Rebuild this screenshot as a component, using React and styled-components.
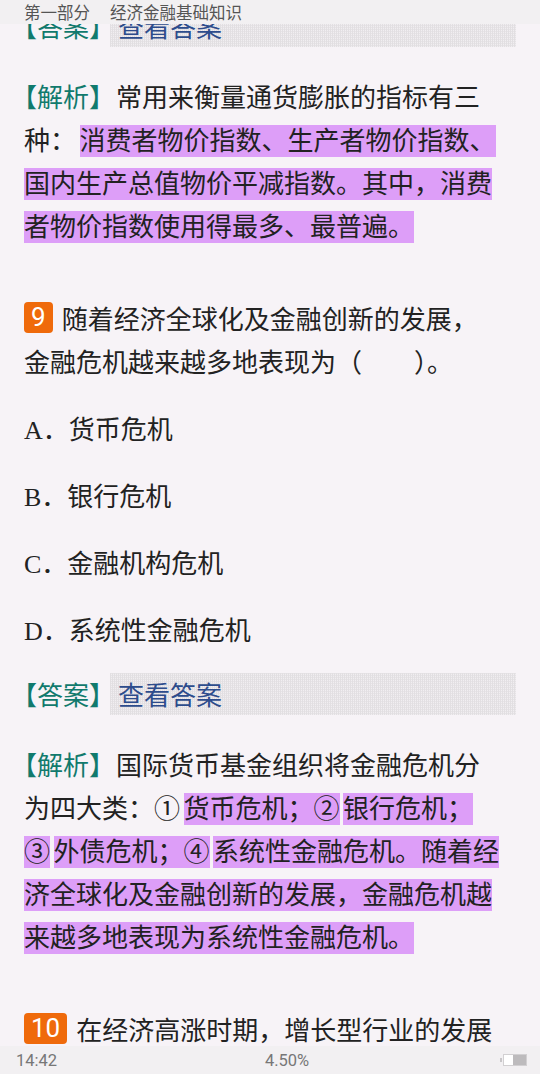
import React from 'react'
import styled, { createGlobalStyle } from 'styled-components'

const GlobalStyle = createGlobalStyle`
  html, body {
    margin: 0;
    padding: 0;
    background: #f7f3f7;
  }
  body {
    font-family: 'Noto Sans CJK SC', 'Noto Sans', sans-serif;
    color: #222;
  }
`

export default () => {
  return (
    <>
      <GlobalStyle />
      <TopBar>
        <span>第一部分</span>
        <span>经济金融基础知识</span>
      </TopBar>

      <Page>
        <AnswerRow>
          <Label>【答案】</Label>
          <AnswerBox>查看答案</AnswerBox>
        </AnswerRow>

        <Analysis>
          <Label>【解析】</Label>常用来衡量通货膨胀的指标有三种：<Mark>消费者物价指数、生产者物价指数、国内生产总值物价平减指数。其中，消费者物价指数使用得最多、最普遍。</Mark>
        </Analysis>

        <Question>
          <Stem>
            <Badge>9</Badge>随着经济全球化及金融创新的发展，金融危机越来越多地表现为（　　）。
          </Stem>
          <Options>
            <Option><Letter>A</Letter>．货币危机</Option>
            <Option><Letter>B</Letter>．银行危机</Option>
            <Option><Letter>C</Letter>．金融机构危机</Option>
            <Option><Letter>D</Letter>．系统性金融危机</Option>
          </Options>
        </Question>

        <AnswerRow $top={23}>
          <Label>【答案】</Label>
          <AnswerBox>查看答案</AnswerBox>
        </AnswerRow>

        <Analysis>
          <Label>【解析】</Label>国际货币基金组织将金融危机分为四大类：①<Mark>货币危机；②</Mark><Mark>银行危机；<br />③</Mark><Mark>外债危机；④</Mark><Mark>系统性金融危机。随着经济全球化及金融创新的发展，金融危机越来越多地表现为系统性金融危机。</Mark>
        </Analysis>

        <Question>
          <Stem>
            <Badge>10</Badge>在经济高涨时期，增长型行业的发展速度通常高于平均水平。
          </Stem>
        </Question>
      </Page>

      <BottomBar>
        <span>14:42</span>
        <Progress>4.50%</Progress>
        <Battery />
      </BottomBar>
    </>
  )
}

/***************************** Styled Components *****************************/

const TopBar = styled.header`
  position: fixed;
  top: 0;
  left: 0;
  right: 0;
  height: 24px;
  z-index: 2;
  display: flex;
  align-items: center;
  gap: 20px;
  padding: 0 24px;
  background: #f2f0f2;
  color: #555;
  font-size: 16.5px;
  line-height: 24px;
`

const BottomBar = styled.footer`
  position: fixed;
  left: 0;
  right: 0;
  bottom: 0;
  height: 28px;
  z-index: 2;
  display: flex;
  align-items: center;
  justify-content: space-between;
  padding: 0 13px 0 16px;
  background: #f2f0f2;
  color: #777;
  font-family: 'Roboto', 'Noto Sans', sans-serif;
  font-size: 16.5px;
`

const Progress = styled.span`
  margin-left: 14px;
`

const Battery = styled.span`
  position: relative;
  width: 22px;
  height: 10px;
  border: 1px solid #d2d0d2;
  background: linear-gradient(to right, #fff 0 40%, #bdbbbd 40% 100%);
  &::before {
    content: '';
    position: absolute;
    left: -4px;
    top: 3px;
    width: 2px;
    height: 4px;
    background: #c9c7c9;
  }
`

const Page = styled.main`
  padding: 5px 24px 60px;
`

const AnswerRow = styled.div`
  display: flex;
  align-items: center;
  height: 42px;
  margin-top: ${props => props.$top || 0}px;
  font-size: 26px;
  line-height: 42px;
`

const Label = styled.span`
  color: #117a6d;
  font-feature-settings: 'halt';
  margin-right: 12px;
`

const AnswerBox = styled.div`
  flex: 1;
  align-self: stretch;
  margin-left: -4px;
  padding-left: 8px;
  color: #2d4c8c;
  background-color: #f1eef1;
  background-image:
    repeating-linear-gradient(to right, #e2dfe2 0 1px, transparent 1px 2px),
    repeating-linear-gradient(to bottom, #e6e3e6 0 1px, transparent 1px 2px);
`

const Analysis = styled.p`
  margin: 27px 0 0;
  max-width: 478px;
  font-size: 26px;
  line-height: 43px;

  ${Label} {
    margin-right: 14px;
  }
`

const Mark = styled.span`
  margin-left: 3.5px;
  background: linear-gradient(to bottom, transparent 0 5px, #dd9ef8 5px 37px, transparent 37px);
  &:first-of-type {
    margin-left: 0;
  }
`

const Question = styled.section`
  margin-top: 50px;
`

const Stem = styled.p`
  margin: 0;
  max-width: 478px;
  font-size: 26px;
  line-height: 43px;
`

const Badge = styled.span`
  display: inline-block;
  vertical-align: top;
  margin: 6px 9px 0 0;
  height: 31px;
  padding: 0 7px;
  border-radius: 4px;
  background: #ef6a0b;
  color: #fff;
  font-family: 'Roboto', 'Noto Sans', sans-serif;
  font-size: 26px;
  line-height: 31px;
`

const Options = styled.div`
  display: flex;
  flex-direction: column;
  gap: 24px;
  margin-top: 24px;
`

const Option = styled.div`
  height: 43px;
  font-size: 26px;
  line-height: 43px;
`

const Letter = styled.span`
  font-family: 'Liberation Serif', serif;
  line-height: 0;
`
